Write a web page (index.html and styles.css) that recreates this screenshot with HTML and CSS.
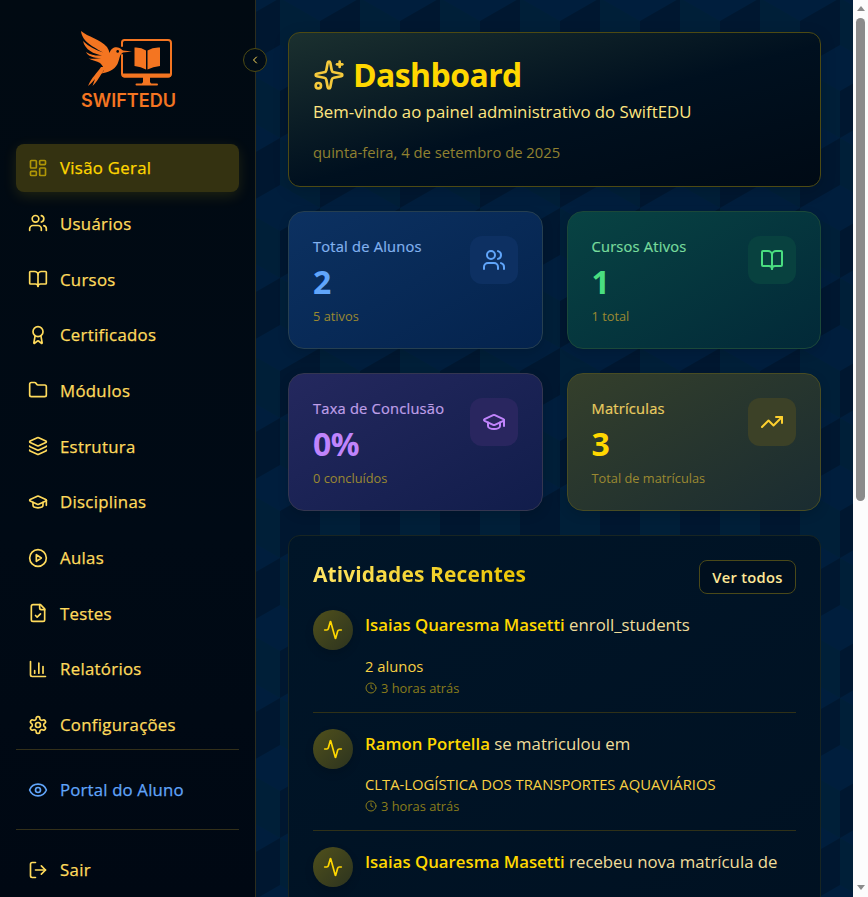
FILE: index.html
```html
<!DOCTYPE html>
<html lang="pt-BR">
<head>
<meta charset="utf-8">
<title>SwiftEDU</title>
<link rel="stylesheet" href="styles.css">
</head>
<body>
<svg class="defs" width="0" height="0">
  <symbol id="dash" viewBox="0 0 24 24"><rect width="7" height="9" x="3" y="3" rx="1"/><rect width="7" height="5" x="14" y="3" rx="1"/><rect width="7" height="9" x="14" y="12" rx="1"/><rect width="7" height="5" x="3" y="16" rx="1"/></symbol>
  <symbol id="users" viewBox="0 0 24 24"><path d="M16 21v-2a4 4 0 0 0-4-4H6a4 4 0 0 0-4 4v2"/><circle cx="9" cy="7" r="4"/><path d="M22 21v-2a4 4 0 0 0-3-3.87"/><path d="M16 3.13a4 4 0 0 1 0 7.75"/></symbol>
  <symbol id="book" viewBox="0 0 24 24"><path d="M12 7v14"/><path d="M3 18a1 1 0 0 1-1-1V4a1 1 0 0 1 1-1h5a4 4 0 0 1 4 4 4 4 0 0 1 4-4h5a1 1 0 0 1 1 1v13a1 1 0 0 1-1 1h-6a3 3 0 0 0-3 3 3 3 0 0 0-3-3z"/></symbol>
  <symbol id="award" viewBox="0 0 24 24"><path d="m15.477 12.89 1.515 8.526a.5.5 0 0 1-.81.47l-3.58-2.687a1 1 0 0 0-1.197 0l-3.586 2.686a.5.5 0 0 1-.81-.469l1.514-8.526"/><circle cx="12" cy="8" r="6"/></symbol>
  <symbol id="folder" viewBox="0 0 24 24"><path d="M20 20a2 2 0 0 0 2-2V8a2 2 0 0 0-2-2h-7.9a2 2 0 0 1-1.69-.9L9.6 3.9A2 2 0 0 0 7.93 3H4a2 2 0 0 0-2 2v13a2 2 0 0 0 2 2Z"/></symbol>
  <symbol id="layers" viewBox="0 0 24 24"><path d="M12.83 2.18a2 2 0 0 0-1.66 0L2.6 6.08a1 1 0 0 0 0 1.83l8.58 3.91a2 2 0 0 0 1.66 0l8.58-3.9a1 1 0 0 0 0-1.83z"/><path d="M2 12a1 1 0 0 0 .58.91l8.6 3.91a2 2 0 0 0 1.65 0l8.58-3.9A1 1 0 0 0 22 12"/><path d="M2 17a1 1 0 0 0 .58.91l8.6 3.91a2 2 0 0 0 1.65 0l8.58-3.9A1 1 0 0 0 22 17"/></symbol>
  <symbol id="cap" viewBox="0 0 24 24"><path d="M21.42 10.922a1 1 0 0 0-.019-1.838L12.83 5.18a2 2 0 0 0-1.66 0L2.6 9.08a1 1 0 0 0 0 1.832l8.57 3.908a2 2 0 0 0 1.66 0z"/><path d="M22 10v6"/><path d="M6 12.500V16a6 3 0 0 0 12 0v-3.500"/></symbol>
  <symbol id="play" viewBox="0 0 24 24"><circle cx="12" cy="12" r="10"/><path d="m10 8 6 4-6 4z"/></symbol>
  <symbol id="file" viewBox="0 0 24 24"><path d="M15 2H6a2 2 0 0 0-2 2v16a2 2 0 0 0 2 2h12a2 2 0 0 0 2-2V7Z"/><path d="M14 2v4a2 2 0 0 0 2 2h4"/><path d="m9 15 2 2 4-4"/></symbol>
  <symbol id="chart" viewBox="0 0 24 24"><path d="M3 3v16a2 2 0 0 0 2 2h16"/><path d="M18 17V9"/><path d="M13 17V5"/><path d="M8 17v-3"/></symbol>
  <symbol id="gear" viewBox="0 0 24 24"><path d="M12.220 2h-.44a2 2 0 0 0-2 2v.18a2 2 0 0 1-1 1.730l-.43.25a2 2 0 0 1-2 0l-.15-.08a2 2 0 0 0-2.730.73l-.22.38a2 2 0 0 0 .73 2.730l.15.1a2 2 0 0 1 1 1.720v.51a2 2 0 0 1-1 1.740l-.15.09a2 2 0 0 0-.73 2.730l.22.38a2 2 0 0 0 2.730.73l.15-.08a2 2 0 0 1 2 0l.43.25a2 2 0 0 1 1 1.730V20a2 2 0 0 0 2 2h.44a2 2 0 0 0 2-2v-.18a2 2 0 0 1 1-1.730l.43-.25a2 2 0 0 1 2 0l.15.08a2 2 0 0 0 2.730-.73l.22-.39a2 2 0 0 0-.73-2.730l-.15-.08a2 2 0 0 1-1-1.740v-.5a2 2 0 0 1 1-1.740l.15-.09a2 2 0 0 0 .73-2.730l-.22-.38a2 2 0 0 0-2.730-.73l-.15.08a2 2 0 0 1-2 0l-.43-.25a2 2 0 0 1-1-1.730V4a2 2 0 0 0-2-2z"/><circle cx="12" cy="12" r="3"/></symbol>
  <symbol id="eye" viewBox="0 0 24 24"><path d="M2.062 12.348a1 1 0 0 1 0-.696 10.750 10.750 0 0 1 19.876 0 1 1 0 0 1 0 .696 10.750 10.750 0 0 1-19.876 0"/><circle cx="12" cy="12" r="3"/></symbol>
  <symbol id="exit" viewBox="0 0 24 24"><path d="M9 21H5a2 2 0 0 1-2-2V5a2 2 0 0 1 2-2h4"/><path d="m16 17 5-5-5-5"/><path d="M21 12H9"/></symbol>
  <symbol id="left" viewBox="0 0 24 24"><path d="m15 18-6-6 6-6"/></symbol>
  <symbol id="sparkles" viewBox="0 0 24 24"><path d="M11.017 2.814a1 1 0 0 1 1.966 0l1.051 5.558a2 2 0 0 0 1.594 1.594l5.558 1.051a1 1 0 0 1 0 1.966l-5.558 1.051a2 2 0 0 0-1.594 1.594l-1.051 5.558a1 1 0 0 1-1.966 0l-1.051-5.558a2 2 0 0 0-1.594-1.594l-5.558-1.051a1 1 0 0 1 0-1.966l5.558-1.051a2 2 0 0 0 1.594-1.594z"/><path d="M20 2v4"/><path d="M22 4h-4"/><circle cx="4" cy="20" r="2"/></symbol>
  <symbol id="trend" viewBox="0 0 24 24"><path d="M16 7h6v6"/><path d="m22 7-8.500 8.500-5-5L2 17"/></symbol>
  <symbol id="pulse" viewBox="0 0 24 24"><path d="M22 12h-2.480a2 2 0 0 0-1.930 1.460l-2.350 8.360a.25.25 0 0 1-.48 0L9.240 2.180a.25.25 0 0 0-.48 0l-2.350 8.360A2 2 0 0 1 4.490 12H2"/></symbol>
  <symbol id="clock" viewBox="0 0 24 24"><circle cx="12" cy="12" r="10"/><path d="M12 6v6l4 2"/></symbol>
</svg>
<div class="app">
  <svg class="cubes" width="853" height="897">
    <defs>
      <pattern id="cube" width="80" height="140" patternUnits="userSpaceOnUse" patternTransform="translate(0 -2)">
        <rect class="top" width="80" height="140"/>
        <path class="dark" d="M40 0V47L0 70V23ZM80 70V117L40 140V93Z"/>
        <path class="teal" d="M40 0L80 23V70L40 47ZM0 70L40 93V140L0 117Z"/>
      </pattern>
    </defs>
    <rect width="853" height="897" fill="url(#cube)"/>
  </svg>
  <aside class="sidebar">
    <div class="brand">
      <svg class="logo" viewBox="0 0 96 80" width="96" height="80">
        <g fill="none" stroke="#f47521" stroke-linecap="round" stroke-linejoin="round">
          <path stroke-width="2" d="M41 16V12.500Q41 10 43.500 10H87Q90 10 90 13V43.500Q90 46.500 87 46.500H43.500Q41 46.500 41 43.500V25"/>
          <path stroke-width="2" d="M55.500 54.500H76"/>
        </g>
        <g fill="#f47521">
          <path d="M41 43.500H90.500Q90.500 47.500 87.500 47.500H43.500Q41 47.500 41 43.500Z"/>
          <path d="M62 47H69V52L71 55H60L62 52Z"/>
          <path d="M53.500 17.500Q60 17 65 20.500V39.500Q60 36.500 53.500 36Z"/>
          <path d="M79 17.500Q72 17 66.500 20.500V39.500Q72 36.500 79 36Z"/>
          <path d="M0 1C7 7 19 9 26 17Q28 20 28.500 23C30 17.500 35 16 38.500 18C40.500 19 41 20 42 20.500L51 21.500L42 22.600C38 25 39 29 36.500 34C33.500 40 26 42.500 20.500 43.500L20 43C25 41 23 37 19 33C16 31 11 30.500 7.500 28.500C12 29 17 28.500 20 28C12 28 7 26 5 22C10 25 15 26 21 25.500C13 24 4 20 2 11C8 17 15 20 22 22.500C13 17 1 12 0 1Z"/>
          <path d="M20 37C16 43 11 47 7 56C10 54 12 51 14 49L11.500 56C15 53 17 49 21 43L25 37Z"/>
        </g>
        <circle cx="36.700" cy="21.400" r="1.300" fill="#010a14"/>
        <text class="wordmark" x="0" y="76.500" textLength="95" lengthAdjust="spacingAndGlyphs">SWIFTEDU</text>
      </svg>
    </div>
    <nav class="nav">
      <a class="item active"><svg><use href="#dash"/></svg>Visão Geral</a>
      <a class="item"><svg><use href="#users"/></svg>Usuários</a>
      <a class="item"><svg><use href="#book"/></svg>Cursos</a>
      <a class="item"><svg><use href="#award"/></svg>Certificados</a>
      <a class="item"><svg><use href="#folder"/></svg>Módulos</a>
      <a class="item"><svg><use href="#layers"/></svg>Estrutura</a>
      <a class="item"><svg><use href="#cap"/></svg>Disciplinas</a>
      <a class="item"><svg><use href="#play"/></svg>Aulas</a>
      <a class="item"><svg><use href="#file"/></svg>Testes</a>
      <a class="item"><svg><use href="#chart"/></svg>Relatórios</a>
      <a class="item"><svg><use href="#gear"/></svg>Configurações</a>
    </nav>
    <div class="side-section"><a class="item portal"><svg><use href="#eye"/></svg>Portal do Aluno</a></div>
    <div class="side-section"><a class="item logout"><svg><use href="#exit"/></svg>Sair</a></div>
    <button class="collapse"><svg><use href="#left"/></svg></button>
  </aside>
  <main class="main">
    <section class="hero">
      <h1><svg><use href="#sparkles"/></svg>Dashboard</h1>
      <p class="welcome">Bem-vindo ao painel administrativo do SwiftEDU</p>
      <p class="date">quinta-feira, 4 de setembro de 2025</p>
    </section>
    <section class="stats">
      <article class="stat blue"><div><h3>Total de Alunos</h3><strong>2</strong><small>5 ativos</small></div><span class="tile"><svg><use href="#users"/></svg></span></article>
      <article class="stat green"><div><h3>Cursos Ativos</h3><strong>1</strong><small>1 total</small></div><span class="tile"><svg><use href="#book"/></svg></span></article>
      <article class="stat purple"><div><h3>Taxa de Conclusão</h3><strong>0%</strong><small>0 concluídos</small></div><span class="tile"><svg><use href="#cap"/></svg></span></article>
      <article class="stat gold"><div><h3>Matrículas</h3><strong>3</strong><small>Total de matrículas</small></div><span class="tile"><svg><use href="#trend"/></svg></span></article>
    </section>
    <section class="recent">
      <header><h2>Atividades Recentes</h2><button class="all">Ver todos</button></header>
      <div class="act"><span class="avatar"><svg><use href="#pulse"/></svg></span><div><p class="who"><b>Isaias Quaresma Masetti</b> enroll_students</p><p class="what">2 alunos</p><p class="when"><svg><use href="#clock"/></svg>3 horas atrás</p></div></div>
      <div class="act"><span class="avatar"><svg><use href="#pulse"/></svg></span><div><p class="who"><b>Ramon Portella</b> se matriculou em</p><p class="what">CLTA-LOGÍSTICA DOS TRANSPORTES AQUAVIÁRIOS</p><p class="when"><svg><use href="#clock"/></svg>3 horas atrás</p></div></div>
      <div class="act"><span class="avatar"><svg><use href="#pulse"/></svg></span><div><p class="who"><b>Isaias Quaresma Masetti</b> recebeu nova matrícula de</p></div></div>
    </section>
  </main>
  <div class="scrollbar"><i class="up"></i><i class="thumb"></i><i class="down"></i></div>
</div>
</body>
</html>
```
FILE: styles.css
```css
* { box-sizing: border-box; margin: 0; padding: 0; }
html, body { height: 100%; overflow: hidden; }
body {
  font-family: "Open Sans", "Noto Sans", sans-serif;
  color: #ffe066;
  background-color: #001a35;
}
.defs { position: absolute; }
svg { fill: none; stroke: currentColor; stroke-width: 2; stroke-linecap: round; stroke-linejoin: round; flex: none; }
.app { position: relative; display: flex; height: 897px; overflow: hidden; }
.cubes { position: absolute; left: 0; top: 0; stroke: none; }
.cubes .top { fill: #001e3d; }
.cubes .dark { fill: #001730; }
.cubes .teal { fill: #001f38; }
.sidebar {
  position: relative; width: 256px; flex: none; display: flex; flex-direction: column;
  background: linear-gradient(180deg, #010a12, #000a15 60%, #000813);
  border-right: 1px solid #2c2d1e;
}
.brand { height: 144px; padding: 30px 0 0 81px; flex: none; }
.logo { display: block; stroke: none; }
.wordmark { font: 600 18px Inter, sans-serif; fill: #f47521; }
.nav { display: flex; flex-direction: column; gap: 8px; padding: 0 16px .2px; }
.item {
  display: flex; align-items: center; gap: 12px; height: 47.710px; flex: none; padding: 0 12px .4px;
  border-radius: 8px; font-size: 16.800px; font-weight: 500; letter-spacing: .3px; color: #ffdb5c;
  -webkit-text-stroke: .25px currentColor;
}
.item svg { width: 20px; height: 20px; }
.active { background: #343211; color: #ffd700; box-shadow: 0 4px 14px rgba(255,215,0,.12); }
.active svg { opacity: .6; }
.portal { color: #60a5fa; letter-spacing: .17px; }
.side-section { margin: 0 16px; padding: 16px 0; border-top: 1px solid #33301a; }
.side-section .item { width: 100%; height: 47.500px; }
.side-section .logout { padding-bottom: 1px; }
.side-section .portal { padding-bottom: 0; }
.collapse {
  position: absolute; left: 243px; top: 48px; width: 24px; height: 24px; border-radius: 50%;
  display: grid; place-items: center; background: #000c18; border: 1px solid #4d4a13; color: #ffdb5c;
}
.collapse svg { width: 12px; height: 12px; }
.main { position: relative; width: 597px; flex: none; padding: 32px; display: flex; flex-direction: column; gap: 24px; }
.hero {
  height: 155px; flex: none; padding: 24px; border: 1px solid #4d4a13; border-radius: 12px;
  background: linear-gradient(165deg, #1b302f 0%, #00101f 52%, #000a15 100%);
  box-shadow: 0 4px 16px rgba(0,0,0,.15);
}
h1 { display: flex; align-items: center; gap: 8px; height: 36px; font-size: 32px; line-height: 34px; font-weight: 700; letter-spacing: -.6px; color: #ffd700; padding-bottom: 1px; }
h1 svg { width: 32px; height: 32px; color: #f5ca3c; }
.welcome { margin-top: 6px; font-size: 16.800px; line-height: 26px; color: #ffe680; }
.date { margin-top: 17px; font-size: 14.800px; line-height: 20px; color: #918130; }
.stats { display: grid; grid-template-columns: 1fr 1fr; gap: 24px; flex: none; }
.stat { height: 138px; padding: 24px; border: 1px solid; border-radius: 16px; display: flex; justify-content: space-between; box-shadow: 0 4px 12px rgba(0,0,0,.12); }
.stat h3 { font-size: 14.700px; line-height: 21px; font-weight: 500; letter-spacing: .2px; -webkit-text-stroke: .2px currentColor; }
.stat strong { display: block; font-size: 32px; line-height: 40px; margin-top: 5px; font-weight: 700; letter-spacing: -.5px; }
.stat small { display: block; font-size: 12.800px; line-height: 18px; margin-top: 5px; color: #9b8931; }
.tile { width: 48px; height: 48px; border-radius: 12px; display: grid; place-items: center; }
.tile svg { width: 24px; height: 24px; }
.blue { background: linear-gradient(150deg, #0c3161, #04234d); border-color: #263f50; color: #60a5fa; }
.blue h3 { color: #82b2ef; }
.blue .tile { background: #0d3062; }
.green { background: linear-gradient(150deg, #084343, #022938); border-color: #1b4839; color: #4ade80; }
.green h3 { color: #78dc9d; }
.green .tile { background: #08413f; }
.purple { background: linear-gradient(150deg, #24285e, #111d4b); border-color: #343650; color: #c084fc; }
.purple h3 { color: #bf9fe8; }
.purple .tile { background: #29265f; }
.gold { background: linear-gradient(150deg, #343f2b, #1a2c31); border-color: #484c23; color: #ffd700; }
.gold h3 { color: #e9cc60; }
.gold .tile { background: #3c4127; color: #fdd02f; }
.recent { height: 560px; flex: none; padding: 24px; border: 1px solid #182522; border-radius: 12px; background: linear-gradient(150deg, #001528, #001020); }
.recent header { display: flex; justify-content: space-between; height: 34px; }
h2 { font-size: 21px; line-height: 28px; font-weight: 700; letter-spacing: .1px; background: linear-gradient(90deg, #ffe566, #eac400); -webkit-background-clip: text; background-clip: text; color: transparent; }
.all { width: 97px; height: 34px; border: 1px solid #4a4919; border-radius: 8px; background: #000f1e; font: 600 14.700px "Open Sans", sans-serif; color: #ffe896; letter-spacing: .3px; }
.act { display: flex; gap: 12px; height: 118.500px; padding-top: 16px; border-bottom: 1px solid #2f3118; }
.avatar { width: 40px; height: 40px; flex: none; border-radius: 50%; display: grid; place-items: center; background: linear-gradient(135deg, #50501b, #2c331f); color: #ffd700; box-shadow: 0 4px 8px rgba(0,0,0,.15); }
.avatar svg { width: 20px; height: 20px; }
.who { font-size: 16.800px; line-height: 30px; color: #f0dd9a; white-space: nowrap; }
.who b { font-weight: 600; color: #ffd700; }
.what { margin-top: 15.500px; font-size: 14.800px; line-height: 21px; color: #f9d043; white-space: nowrap; }
.when { display: flex; align-items: center; gap: 4px; font-size: 12.850px; line-height: 20px; margin-top: 1px; color: #8a7d1b; }
.when svg { width: 12px; height: 12px; }
.scrollbar { position: relative; width: 15px; flex: none; background: #fcfcfc; display: flex; flex-direction: column; align-items: center; padding-top: 6px; }
.up, .down { border: 4.500px solid transparent; }
.up { border-top: 0; border-bottom: 5px solid #8b8b8b; }
.thumb { width: 9px; height: 483px; margin-top: 7px; border-radius: 5px; background: #8b8b8b; }
.down { border-bottom: 0; border-top: 5px solid #8b8b8b; margin-top: 384px; }
```
